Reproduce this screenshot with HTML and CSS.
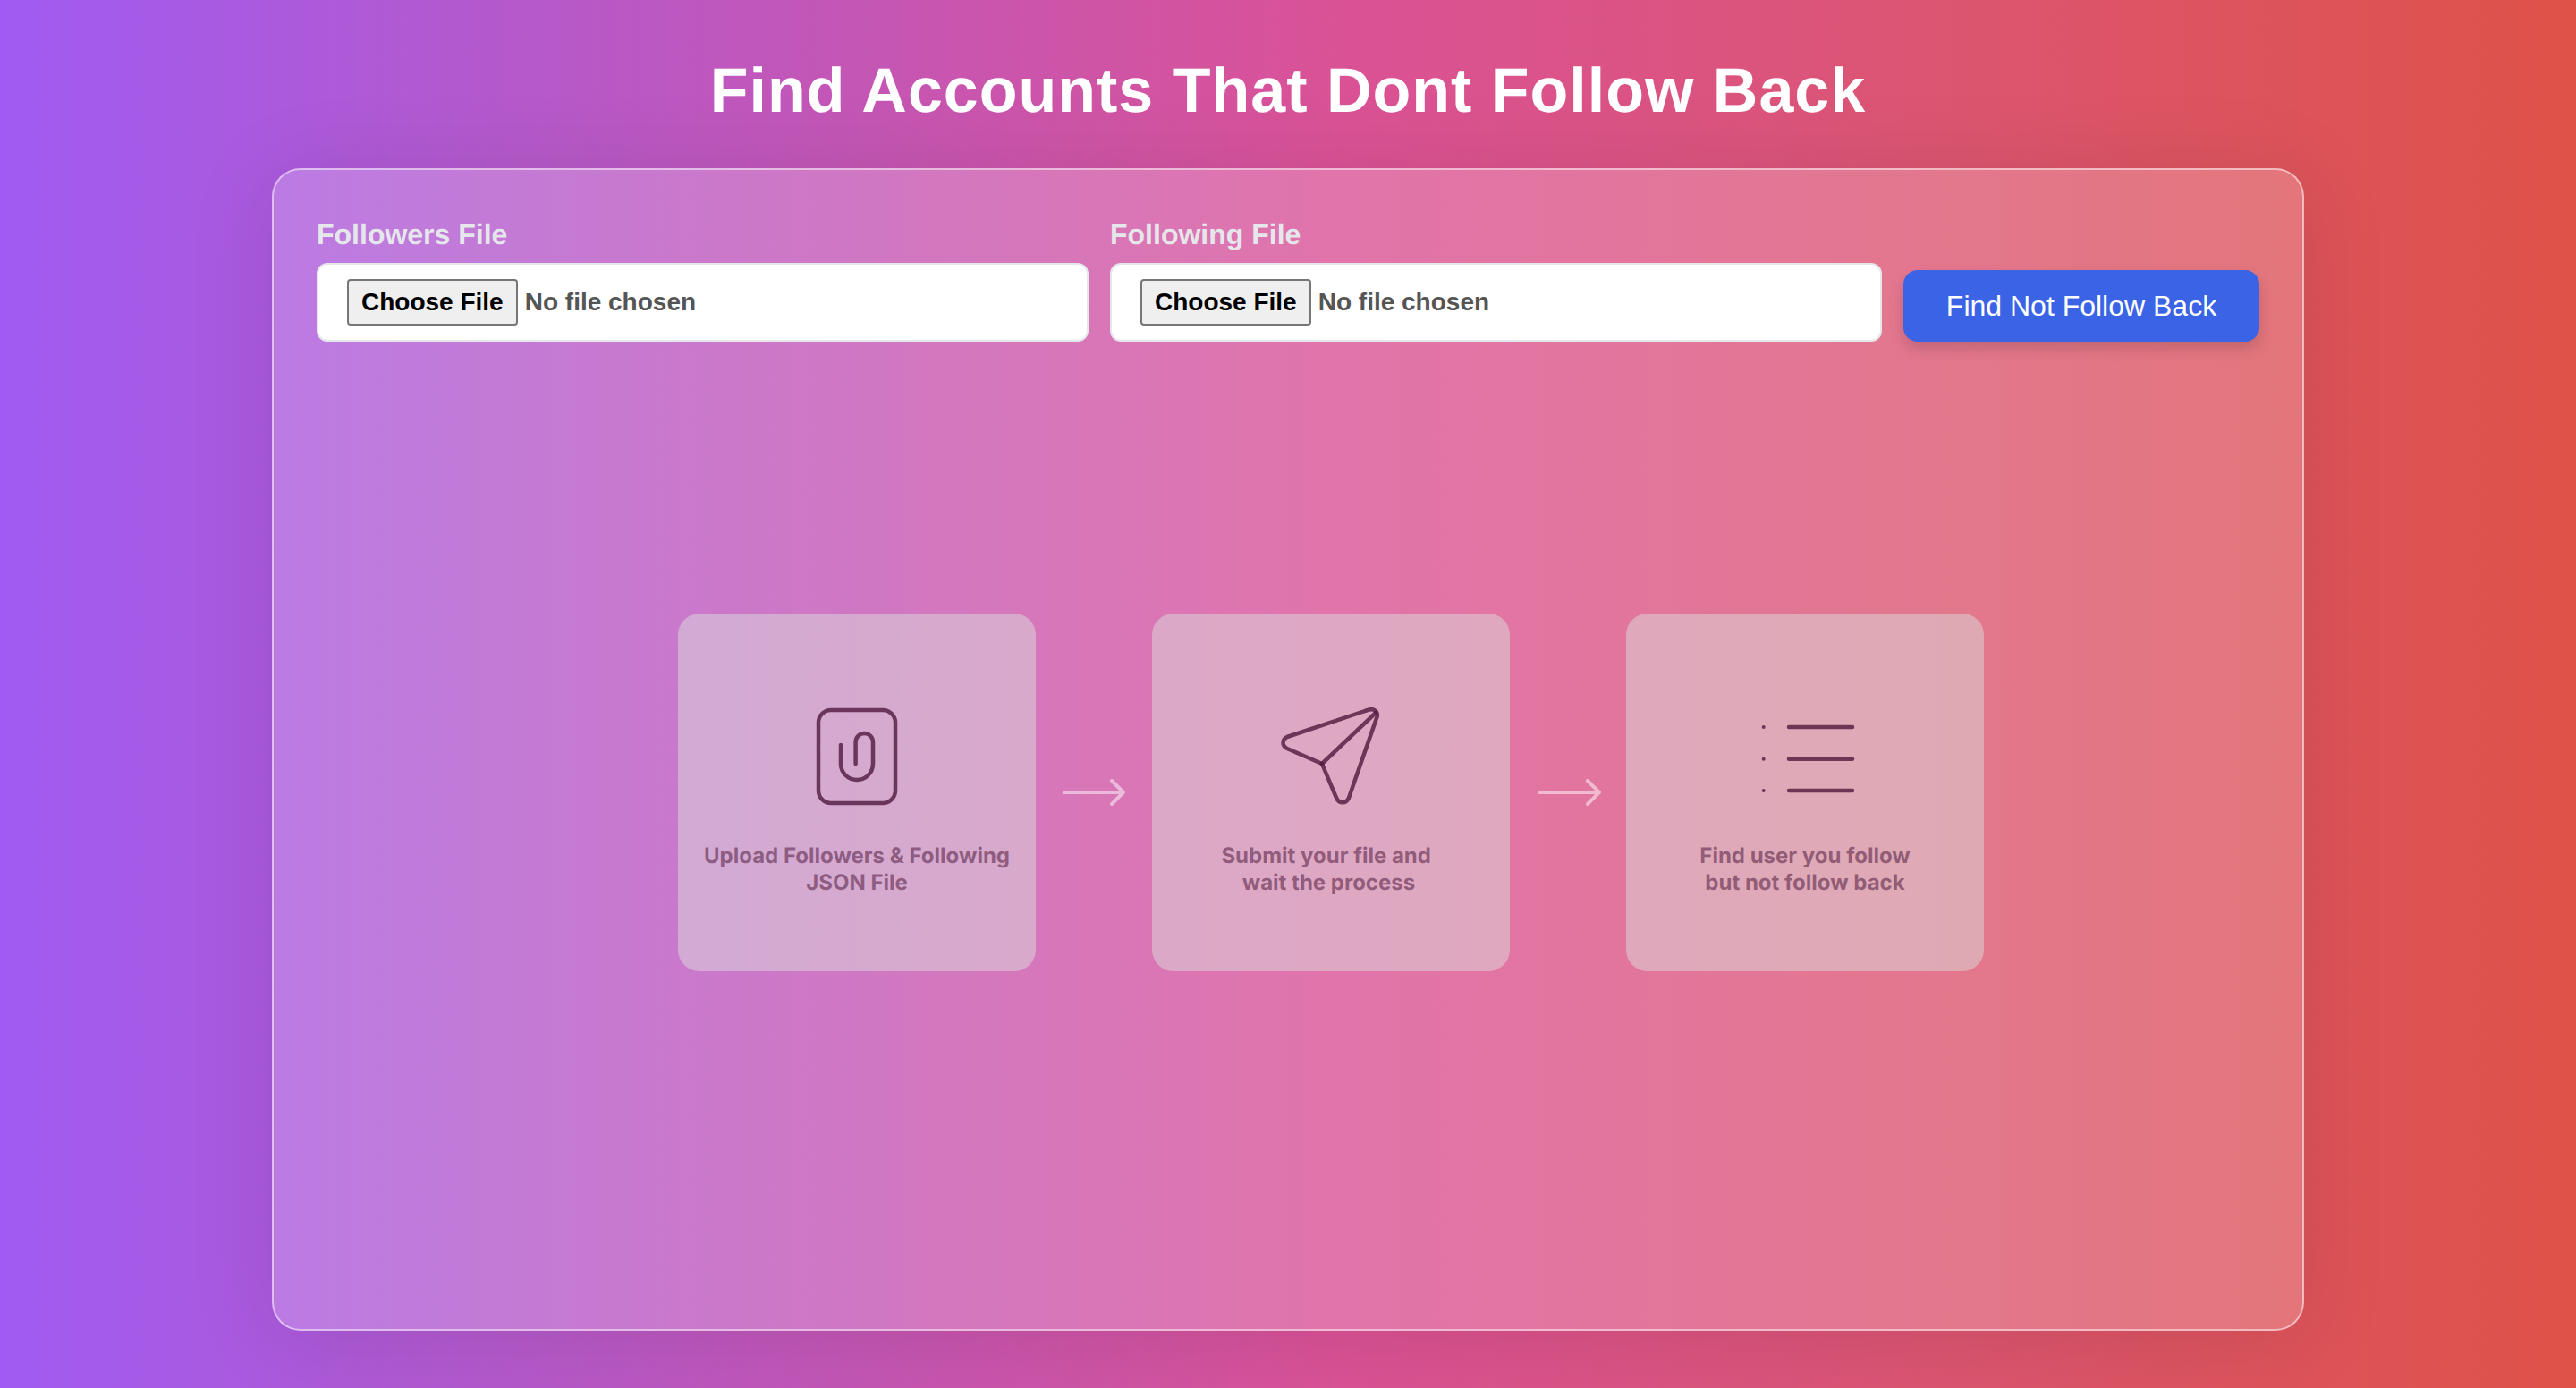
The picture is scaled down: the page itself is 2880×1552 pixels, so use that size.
FILE: index.html
```html
<!DOCTYPE html>
<html lang="en">
<head>
<meta charset="utf-8">
<title>Find Accounts That Dont Follow Back</title>
<link rel="stylesheet" href="styles.css">
</head>
<body>
<h1 class="title">Find Accounts That Dont Follow Back</h1>
<main class="panel">
  <form class="form">
    <div class="field">
      <label class="label" for="followers">Followers File</label>
      <input class="file" id="followers" type="file">
    </div>
    <div class="field">
      <label class="label" for="following">Following File</label>
      <input class="file" id="following" type="file">
    </div>
    <button class="submit" type="button">Find Not Follow Back</button>
  </form>
  <section class="steps">
    <div class="step">
      <svg class="icon" viewBox="0 0 120 120" fill="none" stroke="currentColor" stroke-width="4.500" stroke-linecap="round" stroke-linejoin="round">
        <rect x="17" y="8" width="86" height="104" rx="14"/>
        <path d="M42 47v21a18 18 0 0 0 36 0V43.700a9.700 9.700 0 0 0-19.400 0V68"/>
      </svg>
      <p class="step-text">Upload Followers &amp; Following<br>JSON File</p>
    </div>
    <svg class="arrow" viewBox="0 0 70 30" fill="none" stroke="currentColor" stroke-width="4" stroke-linecap="round" stroke-linejoin="round">
      <path d="M0 15h67M55 2l13 13-13 13"/>
    </svg>
    <div class="step">
      <svg class="icon" viewBox="0 0 120 120" fill="none" stroke="currentColor" stroke-width="4.500" stroke-linecap="round" stroke-linejoin="round">
        <path d="M50 68 110 11"/>
        <path d="M50 68 11 51c-6-3-6-10 0-13L101 8c8-3 13 3 10 9L80 106c-3 7-11 7-14 0L50 68Z"/>
      </svg>
      <p class="step-text step-text-shift">Submit your file and&nbsp;<br>wait the process</p>
    </div>
    <svg class="arrow arrow-late" viewBox="0 0 70 30" fill="none" stroke="currentColor" stroke-width="4" stroke-linecap="round" stroke-linejoin="round">
      <path d="M0 15h67M55 2l13 13-13 13"/>
    </svg>
    <div class="step">
      <svg class="icon" viewBox="0 0 120 120" fill="none" stroke="currentColor" stroke-width="4.500" stroke-linecap="round">
        <path d="M42 27h71M42 62.700h71M42 98h71"/>
        <circle class="dot" cx="13.700" cy="27" r="2"/>
        <circle class="dot" cx="13.700" cy="62.700" r="2"/>
        <circle class="dot" cx="13.700" cy="98" r="2"/>
      </svg>
      <p class="step-text">Find user you follow<br>but not follow back</p>
    </div>
  </section>
</main>
</body>
</html>
```
FILE: styles.css
```css
* { box-sizing: border-box; }
body {
  margin: 0;
  height: 1552px;
  padding-top: 67px;
  background: linear-gradient(to right, #a05bf2, #b559cb 20%, #da5296 52%, #dc5570 76%, #de5248);
  font-family: "Liberation Sans", Arial, sans-serif;
  text-rendering: geometricPrecision;
  overflow: hidden;
}
.title {
  margin: 0 0 53px;
  height: 68px;
  text-align: center;
  color: #fff;
  font-weight: 700;
  font-size: 70px;
  letter-spacing: 1px;
  line-height: 68px;
}
.panel {
  width: 2272px;
  height: 1300px;
  margin: 0 auto;
  padding: 48px;
  border: 2px solid rgba(255, 255, 255, .5);
  border-radius: 32px;
  background: rgba(255, 255, 255, .2);
  box-shadow: 0 8px 100px rgba(0, 0, 0, .1);
  display: flex;
  flex-direction: column;
}
.form {
  padding-top: 4px;
  display: flex;
  align-items: flex-end;
  gap: 24px;
}
.field { flex: 1; min-width: 0; }
.label {
  display: block;
  margin-bottom: 12px;
  color: #e5e7eb;
  font-weight: 700;
  font-size: 32px;
  line-height: 40px;
}
.file {
  display: block;
  width: 100%;
  height: 88px;
  padding: 16px 32px;
  background: #fff;
  border: 2px solid #e5e7eb;
  border-radius: 12px;
  color: #555;
  font-family: "Liberation Sans", Arial, sans-serif;
  font-weight: 700;
  font-size: 28px;
}
.file::file-selector-button {
  height: 52px;
  margin-right: 8px;
  padding: 0 14px;
  background: #efefef;
  border: 2px solid #767676;
  border-radius: 4px;
  color: #000;
  font: 700 28px "Liberation Sans", Arial, sans-serif;
}
.submit {
  flex: none;
  width: 398px;
  height: 80px;
  background: #3a63e5;
  border: 0;
  border-radius: 16px;
  color: #fff;
  font-family: "Liberation Sans", Arial, sans-serif;
  font-size: 32px;
  box-shadow: 0 8px 16px rgba(0, 0, 0, .15);
}
.steps {
  flex: 1;
  padding: 0 0 48px 96px;
  display: flex;
  align-items: center;
  justify-content: center;
  gap: 30px;
}
.step {
  flex: none;
  width: 400px;
  height: 400px;
  padding: 100px 24px 0;
  border-radius: 24px;
  background: rgba(220, 220, 220, .5);
  color: rgba(80, 25, 62, .8);
  text-align: center;
}
.icon {
  display: block;
  width: 120px;
  height: 120px;
  margin: 0 auto 36px;
}
.dot { fill: currentColor; stroke: none; }
.step-text {
  margin: 0;
  opacity: .68;
  font-family: Inter, sans-serif;
  font-weight: 650;
  font-size: 24px;
  line-height: 30px;
}
.step-text-shift { padding-right: 5px; }
.arrow {
  flex: none;
  width: 70px;
  height: 30px;
  color: rgba(255, 255, 255, .5);
}
.arrow-late { margin: 0 -2px 0 2px; }
```
